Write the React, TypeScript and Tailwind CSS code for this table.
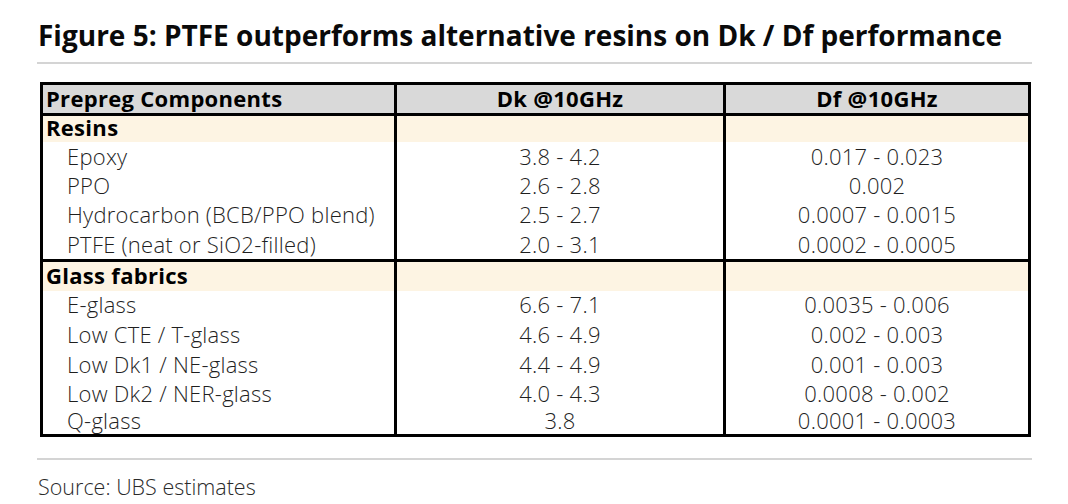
import React from "react";

type Row =
  | { kind: "group"; label: string; h: string }
  | { kind: "item"; label: string; dk: string; df: string; h: string };

const rows: Row[] = [
  { kind: "group", label: "Resins", h: "h-[29.5px]" },
  { kind: "item", label: "Epoxy", dk: "3.8 - 4.2", df: "0.017 - 0.023", h: "h-[29.25px] pb-[2px]" },
  { kind: "item", label: "PPO", dk: "2.6 - 2.8", df: "0.002", h: "h-[29.25px] pb-[2px]" },
  { kind: "item", label: "Hydrocarbon (BCB/PPO blend)", dk: "2.5 - 2.7", df: "0.0007 - 0.0015", h: "h-[29.25px] pb-[2px]" },
  { kind: "item", label: "PTFE (neat or SiO2-filled)", dk: "2.0 - 3.1", df: "0.0002 - 0.0005", h: "h-[29.25px] pb-[1px]" },
  { kind: "group", label: "Glass fabrics", h: "h-[31.5px]" },
  { kind: "item", label: "E-glass", dk: "6.6 - 7.1", df: "0.0035 - 0.006", h: "h-[29.3px] pb-[2px]" },
  { kind: "item", label: "Low CTE / T-glass", dk: "4.6 - 4.9", df: "0.002 - 0.003", h: "h-[29.5px] pb-[2px]" },
  { kind: "item", label: "Low Dk1 / NE-glass", dk: "4.4 - 4.9", df: "0.001 - 0.003", h: "h-[29.5px] pb-[1px]" },
  { kind: "item", label: "Low Dk2 / NER-glass", dk: "4.0 - 4.3", df: "0.0008 - 0.002", h: "h-[28.5px] pb-[1px]" },
  { kind: "item", label: "Q-glass", dk: "3.8", df: "0.0001 - 0.0003", h: "h-[26.5px] pb-[2px]" },
];

const cols = "grid grid-cols-[351px_3px_326px_3px_1fr]";

export default function App() {
  return (
    <div className="w-[1068px] h-[504px] bg-white font-['Open_Sans',sans-serif] text-[#1a1a1a] overflow-hidden">
      <div className="pl-[38px] pr-[36px] pt-[18px]">
        <h1 className="text-[28px] leading-[34px] font-bold text-[#0a0a0a] whitespace-nowrap">
          Figure 5: PTFE outperforms alternative resins on Dk / Df performance
        </h1>
        <div className="mt-[10px] h-[2px] bg-[#d4d4d4] -ml-px" />
        <div className="mt-[18px] ml-[2px] mr-[1px] border-[3px] border-black">
          <div className={`${cols} h-[27.5px] pb-[2px] bg-[#d9d9d9] items-center text-[22px] font-bold tracking-[0.3px] text-black`}>
            <div className="pl-[3px] leading-none whitespace-nowrap">Prepreg Components</div>
            <div className="-mb-[2px] self-stretch bg-black" />
            <div className="text-center leading-none">Dk @10GHz</div>
            <div className="-mb-[2px] self-stretch bg-black" />
            <div className="text-center leading-none">Df @10GHz</div>
          </div>
          {rows.map((r, i) =>
            r.kind === "group" ? (
              <div
                key={i}
                className={`${cols} ${r.h} pb-[3px] bg-[#fdf4e3] border-t-[3px] border-black items-center text-[22px] font-bold tracking-[0.3px] text-black`}
              >
                <div className="pl-[3px] leading-none whitespace-nowrap">{r.label}</div>
                <div className="-mb-[3px] self-stretch bg-black" />
                <div />
                <div className="-mb-[3px] self-stretch bg-black" />
                <div />
              </div>
            ) : (
              <div key={i} className={`${cols} ${r.h} items-center text-[22px] font-light tracking-[0.25px] text-[#1f1f1f]`}>
                <div className="pl-[24px] leading-none whitespace-nowrap">{r.label}</div>
                <div className="-my-[4px] self-stretch bg-black" />
                <div className="text-center leading-none">{r.dk}</div>
                <div className="-my-[4px] self-stretch bg-black" />
                <div className="text-center leading-none">{r.df}</div>
              </div>
            )
          )}
        </div>
        <div className="mt-[21px] h-[2px] bg-[#d4d4d4] -ml-px" />
        <div className="mt-[15px] text-[21.5px] leading-[24px] font-light text-[#2a2a2a]">Source: UBS estimates</div>
      </div>
    </div>
  );
}
